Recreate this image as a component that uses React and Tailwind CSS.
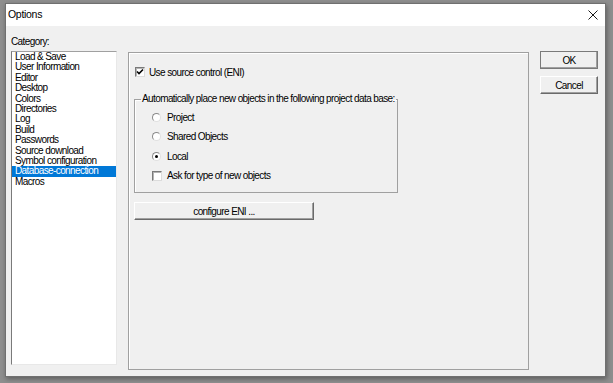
import React from "react";

const categories = [
  "Load & Save",
  "User Information",
  "Editor",
  "Desktop",
  "Colors",
  "Directories",
  "Log",
  "Build",
  "Passwords",
  "Source download",
  "Symbol configuration",
  "Database-connection",
  "Macros",
];

function CheckBox({ checked }) {
  return (
    <span className="w-[10px] h-[10px] flex items-center justify-center bg-white border border-t-[#7a7a7a] border-l-[#7a7a7a] border-r-[#dcdcdc] border-b-[#dcdcdc] shadow-[inset_1px_1px_0_#b4b4b4]">
      {checked && (
        <svg width="8" height="8" viewBox="0 0 8 8">
          <path d="M1 3.5 L3 5.5 L7 1.5" stroke="#000" strokeWidth="1.6" fill="none" />
        </svg>
      )}
    </span>
  );
}

function Radio({ checked }) {
  return (
    <span className="w-[9px] h-[9px] rounded-full flex items-center justify-center bg-white border border-t-[#8a8a8a] border-l-[#8a8a8a] border-r-[#e0e0e0] border-b-[#e0e0e0]">
      {checked && <span className="w-[3px] h-[3px] rounded-full bg-black" />}
    </span>
  );
}

function Button({ children, className = "" }) {
  return (
    <div
      className={
        "h-[18px] flex items-center justify-center bg-[#f0f0f0] border border-t-white border-l-white border-r-[#6a6a6a] border-b-[#6a6a6a] shadow-[inset_-1px_-1px_0_#a0a0a0] " +
        className
      }
    >
      {children}
    </div>
  );
}

export default function App() {
  return (
    <div className="w-[613px] h-[383px] overflow-hidden bg-[#8f8f8f] pt-[3px] pl-[5px] font-['Liberation_Sans',Arial,sans-serif] text-[10px] tracking-[-0.6px] text-black">
      <div className="w-[601px] h-[374px] flex flex-col bg-[#f0f0f0] border border-[#707070] shadow-[1px_2px_5px_rgba(0,0,0,0.35)]">
        {/* Title bar */}
        <div className="h-[22px] shrink-0 bg-white flex items-center justify-between pl-[2px] pr-[7px]">
          <span className="text-[10.5px] tracking-[-0.3px]">Options</span>
          <svg width="10" height="10" viewBox="0 0 10 10">
            <path d="M0.5 0.5 L9.5 9.5 M9.5 0.5 L0.5 9.5" stroke="#1a1a1a" strokeWidth="1" />
          </svg>
        </div>

        {/* Body */}
        <div className="flex-1 flex pl-[5px]">
          <div className="w-[106px] pt-[10px] flex flex-col">
            <div className="h-[12px] leading-[12px]">Category:</div>
            <div className="mt-[3px] h-[314px] bg-white border border-t-[#a0a0a0] border-l-[#7a7a7a] border-r-[#e8e8e8] border-b-[#e8e8e8]">
              {categories.map((c) => (
                <div
                  key={c}
                  className={
                    "h-[10.4px] leading-[10.4px] pl-[3px] whitespace-nowrap " +
                    (c === "Database-connection" ? "bg-[#0078d7] text-white" : "")
                  }
                >
                  {c}
                </div>
              ))}
            </div>
          </div>

          {/* Panel */}
          <div className="ml-[11px] mt-[26px] w-[401px] h-[318px] border border-[#a0a0a0] shadow-[inset_1px_1px_0_#ffffff] pl-[5px] flex flex-col">
            <div className="mt-[13px] h-[12px] flex items-center ml-[1px]">
              <CheckBox checked />
              <span className="ml-[4px]">Use source control (ENI)</span>
            </div>

            <fieldset className="mt-[15px] w-[264px] min-w-0 h-[100px] border border-[#a0a0a0] shadow-[inset_1px_1px_0_#ffffff] p-0">
              <legend className="ml-[6px] px-[1px] h-[12px] leading-[12px] whitespace-nowrap">
                Automatically place new objects in the following project data base:
              </legend>
              <div className="pl-[17px] pt-[3px]">
                <div className="h-[19.3px] flex items-center">
                  <Radio />
                  <span className="ml-[6px]">Project</span>
                </div>
                <div className="h-[19.3px] flex items-center">
                  <Radio />
                  <span className="ml-[6px]">Shared Objects</span>
                </div>
                <div className="h-[19.3px] flex items-center">
                  <Radio checked />
                  <span className="ml-[6px]">Local</span>
                </div>
                <div className="h-[19.3px] flex items-center">
                  <CheckBox />
                  <span className="ml-[5px]">Ask for type of new objects</span>
                </div>
              </div>
            </fieldset>

            <Button className="mt-[9px] w-[180px]">configure ENI ...</Button>
          </div>

          {/* Buttons */}
          <div className="ml-[11px] mt-[25px] w-[58px] flex flex-col gap-[7px]">
            <Button className="outline outline-1 outline-[#7a7a7a] -outline-offset-1">OK</Button>
            <Button>Cancel</Button>
          </div>
        </div>
      </div>
    </div>
  );
}
